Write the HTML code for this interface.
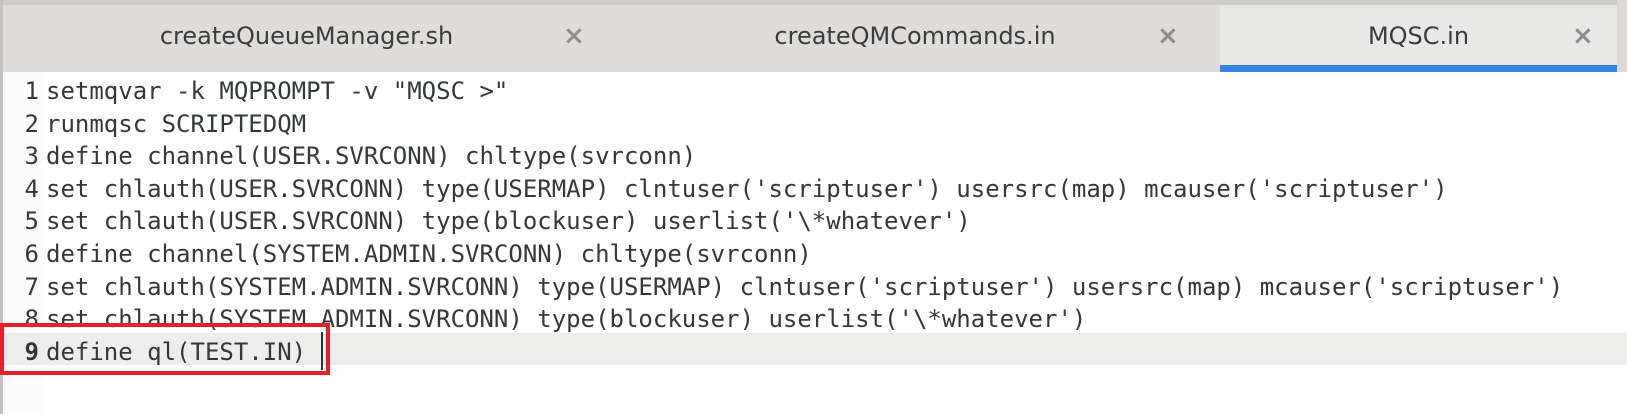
<!DOCTYPE html>
<html><head><style>
body{margin:0;width:1627px;height:414px;overflow:hidden;background:#fff;position:relative;font-family:"DejaVu Sans","Liberation Sans",sans-serif}
.topb{position:absolute;left:0;top:0;width:1627px;height:5px;background:#cfcbc7}
.leftb{position:absolute;left:0;top:0;width:3px;height:414px;background:#c4c0bc}
.rightb{position:absolute;left:1617px;top:0;width:10px;height:72px;background:#dcd9d6}
.tab{position:absolute;top:5px;height:67px;background:#dfdcd9;color:#3a3d3e;font-size:24px;line-height:62px;text-align:center}
.x{position:absolute;top:5px;height:67px;line-height:62px;color:#8e8e8e;font-size:26px;font-weight:bold}
.blue{position:absolute;left:1220px;top:65px;width:397px;height:7px;background:#3584e4}
.hl{position:absolute;left:3px;top:333px;width:1624px;height:32px;background:#ededec}
.gut{position:absolute;left:3px;top:72px;width:38px;height:342px;background:#fbfbfb}
.code{position:absolute;left:0;top:75px;font-family:"DejaVu Sans Mono","Liberation Mono",monospace;font-size:24px;line-height:32.6px;color:#33383a;white-space:pre}
.n{display:inline-block;width:39px;text-align:right;margin-right:7px}
.red{position:absolute;left:0;top:323px;width:322px;height:44px;border:4px solid #e5202b}
.cur{position:absolute;left:321px;top:332px;width:2px;height:38px;background:#2e3436}
</style></head><body>
<div class="topb"></div>
<div class="tab" style="left:3px;width:607px;background:#dfdcd9">createQueueManager.sh</div>
<div class="tab" style="left:610px;width:610px">createQMCommands.in</div>
<div class="tab" style="left:1220px;width:397px;background:#e8e8e7">MQSC.in</div>
<div class="x" style="left:563px">×</div>
<div class="x" style="left:1157px">×</div>
<div class="x" style="left:1572px">×</div>
<div class="blue"></div>
<div class="rightb"></div>
<div class="gut"></div>
<div class="hl"></div>
<div class="leftb"></div>
<div class="code"><span class="n">1</span>setmqvar -k MQPROMPT -v "MQSC &gt;"
<span class="n">2</span>runmqsc SCRIPTEDQM
<span class="n">3</span>define channel(USER.SVRCONN) chltype(svrconn)
<span class="n">4</span>set chlauth(USER.SVRCONN) type(USERMAP) clntuser('scriptuser') usersrc(map) mcauser('scriptuser')
<span class="n">5</span>set chlauth(USER.SVRCONN) type(blockuser) userlist('\*whatever')
<span class="n">6</span>define channel(SYSTEM.ADMIN.SVRCONN) chltype(svrconn)
<span class="n">7</span>set chlauth(SYSTEM.ADMIN.SVRCONN) type(USERMAP) clntuser('scriptuser') usersrc(map) mcauser('scriptuser')
<span class="n">8</span>set chlauth(SYSTEM.ADMIN.SVRCONN) type(blockuser) userlist('\*whatever')
<span class="n" style="font-weight:bold">9</span>define ql(TEST.IN)</div>
<div class="cur"></div>
<div class="red"></div>
</body></html>
